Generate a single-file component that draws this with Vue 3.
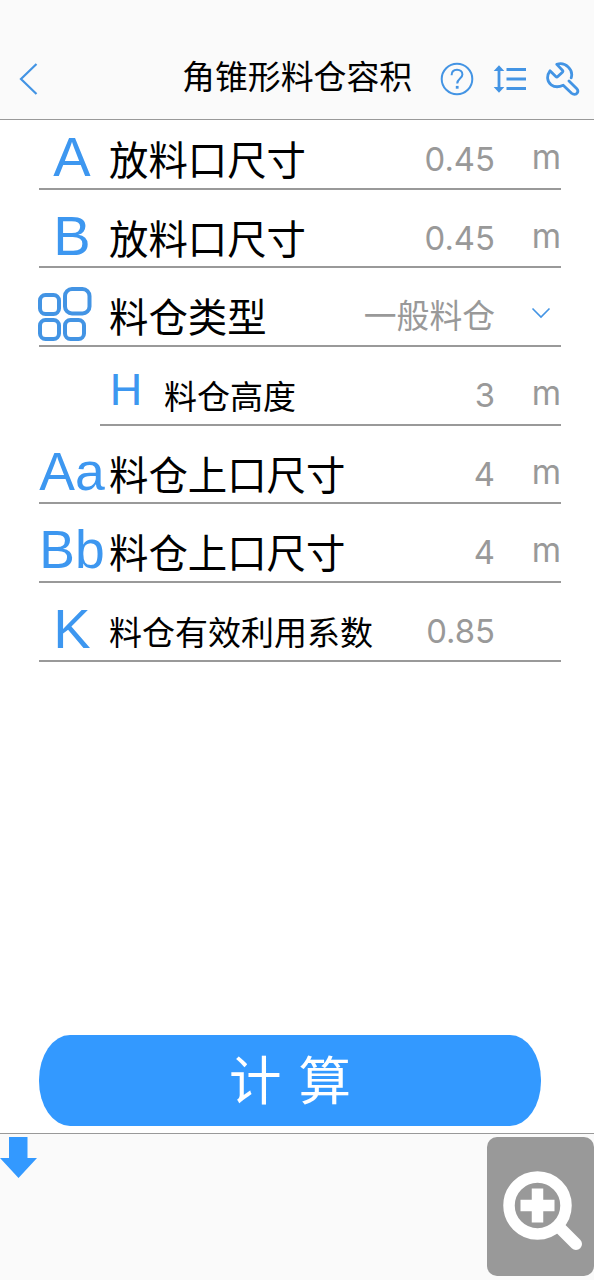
<script setup>
import { reactive } from "vue";

const rows = reactive([
  { key: "A", label: "放料口尺寸", value: "0.45", unit: "m" },
  { key: "B", label: "放料口尺寸", value: "0.45", unit: "m" },
  { icon: true, label: "料仓类型", value: "一般料仓", select: true },
  { key: "H", label: "料仓高度", value: "3", unit: "m", sub: true },
  { key: "Aa", label: "料仓上口尺寸", value: "4", unit: "m", wide: true },
  { key: "Bb", label: "料仓上口尺寸", value: "4", unit: "m", wide: true },
  { key: "K", label: "料仓有效利用系数", value: "0.85", small: true },
]);
</script>

<template>
  <div class="page">
    <header class="header">
      <svg class="back" viewBox="0 0 20 34">
        <path d="M17.5 2L2 17L17.5 32" />
      </svg>
      <h1 class="title">角锥形料仓容积</h1>
      <div class="tools">
        <svg class="tool" viewBox="0 0 34 34">
          <circle cx="17" cy="17" r="15.3" />
          <path d="M11.6 13.2C11.6 9.6 13.8 7.7 17 7.7C20.2 7.7 22.4 9.7 22.4 12.4C22.4 16.5 17.2 16.6 17.2 21.6" />
          <path d="M15.8 25.3H18.6" stroke-width="2.8" />
        </svg>
        <svg class="tool" viewBox="0 0 34 34">
          <path d="M6 6V28" stroke-width="2.8" />
          <path class="solid" d="M6 3.2L11.3 9H.7ZM6 30.8L11.3 25H.7Z" />
          <path d="M13.5 7.5H33M13.5 17H33M13.5 26.4H33" stroke-width="3" />
        </svg>
        <svg class="tool wrench" viewBox="0 0 34 34">
          <path
            d="M25.2 15.8C26.3 12.2 25.2 7.8 22.2 5C19 1.9 14.6 1 10.8 2.4L16.4 8.2C17 8.9 17 9.6 16.4 10.2L11.8 14.6C11.2 15.2 10.4 15.2 9.8 14.6L4 8.8C.2 14 1.2 20 5.2 22.8C8.6 25.3 13 25.2 17.2 23.2L25.6 31.2C27.4 32.8 30.1 32.7 31.2 31C32.3 29.3 32 27.8 30.6 26.4L23 19"
          />
        </svg>
      </div>
    </header>

    <main class="form">
      <div
        v-for="(row, i) in rows"
        :key="i"
        class="row"
        :class="{ sub: row.sub, small: row.small, wide: row.wide }"
      >
        <div class="symbol">
          <svg v-if="row.icon" class="grid-icon" viewBox="0 0 54 54">
            <rect x="2" y="8" width="19" height="19" rx="5.5" />
            <rect x="27" y="2" width="24.5" height="24.5" rx="7" />
            <rect x="2" y="33" width="19" height="19" rx="5.5" />
            <rect x="27" y="33" width="19" height="19" rx="5.5" />
          </svg>
          <span v-else>{{ row.key }}</span>
        </div>
        <div class="label">{{ row.label }}</div>
        <div class="value">{{ row.value }}</div>
        <div class="unit">
          <svg v-if="row.select" class="chevron" viewBox="0 0 20 12">
            <path d="M1.5 1.5L10 10L18.5 1.5" />
          </svg>
          <template v-else>{{ row.unit }}</template>
        </div>
      </div>
    </main>

    <button class="calc">计 算</button>

    <footer class="footer">
      <svg class="arrow" viewBox="0 0 37 41">
        <path d="M9 0H27.5V21H37L18.5 41L0 21H9Z" />
      </svg>
      <div class="zoom">
        <svg class="glass" viewBox="0 0 80 80">
          <path d="M56 56L73 73" stroke-width="12" stroke-linecap="round" />
          <circle cx="34.5" cy="34.5" r="28.5" stroke-width="11.5" />
          <path d="M34.5 17.5V51.5M17.5 34.5H51.5" stroke-width="11.5" />
        </svg>
      </div>
    </footer>
  </div>
</template>

<style>
body {
  margin: 0;
  background: #fff;
}
</style>

<style scoped>
.page {
  width: 594px;
  height: 1280px;
  box-sizing: border-box;
  display: flex;
  flex-direction: column;
  background: #fff;
  color: #000;
  font-family: Inter, "Noto Sans CJK SC", sans-serif;
  overflow: hidden;
}

.header {
  height: 120px;
  box-sizing: border-box;
  padding: 38px 14px 0 19px;
  display: flex;
  align-items: center;
  background: #fafafa;
  border-bottom: 1px solid #999;
}

.back {
  width: 20px;
  height: 34px;
  fill: none;
  stroke: #4394e4;
  stroke-width: 2.2;
}

.title {
  margin: 0 0 0 143px;
  padding-bottom: 3px;
  font-size: 32.9px;
  line-height: 40px;
  font-weight: 400;
  white-space: nowrap;
}

.tools {
  margin-left: auto;
  display: flex;
  gap: 19px;
}

.tool {
  width: 34px;
  height: 34px;
  fill: none;
  stroke: #4394e4;
  stroke-width: 2;
}

.tool .solid {
  fill: #4394e4;
  stroke: none;
}

.wrench {
  stroke-width: 2.8;
  stroke-linecap: round;
  stroke-linejoin: round;
}

.form {
  margin: -9px 33px 0 39px;
}

.row {
  height: 78.7px;
  box-sizing: border-box;
  padding-top: 22px;
  display: flex;
  align-items: center;
  border-bottom: 2px solid #999;
}

.symbol {
  width: 66px;
  margin-right: 4px;
  padding-bottom: 7px;
  text-align: center;
  color: #3d97f0;
  font-family: "Liberation Sans", Arial, sans-serif;
  font-size: 56px;
  line-height: 56px;
}

.wide .symbol {
  font-size: 53.5px;
}

.grid-icon {
  display: block;
  width: 54px;
  height: 54px;
  margin-left: -1px;
  fill: none;
  stroke: #4394e4;
  stroke-width: 4;
}

.label {
  padding-top: 1px;
  font-size: 39.4px;
  line-height: 50px;
  white-space: nowrap;
}

.small .label,
.sub .label {
  font-size: 33px;
}

.value {
  margin-left: auto;
  padding-bottom: 3px;
  color: #999;
  font-size: 32.8px;
  line-height: 40px;
}

.unit {
  width: 66px;
  padding-bottom: 7px;
  color: #999;
  font-size: 33.5px;
  line-height: 40px;
  text-align: right;
}

.chevron {
  display: block;
  width: 20px;
  height: 12px;
  margin: 0 10px 3px auto;
  fill: none;
  stroke: #4394e4;
  stroke-width: 1.6;
}

.sub {
  margin-left: 61px;
}

.sub .symbol {
  width: 52px;
  margin-right: 12px;
  padding-bottom: 13px;
  font-size: 45px;
}

.calc {
  width: 502px;
  height: 91px;
  margin: auto 0 7px 39px;
  padding: 0 0 8px;
  border: 0;
  border-radius: 31px / 45px;
  background: #3399ff;
  color: #fff;
  font-family: inherit;
  font-size: 52.5px;
  word-spacing: 2px;
}

.footer {
  height: 147px;
  box-sizing: border-box;
  padding-top: 3px;
  display: flex;
  justify-content: space-between;
  background: #fafafa;
  border-top: 1px solid #999;
}

.arrow {
  width: 37px;
  height: 41px;
  fill: #3399ff;
}

.zoom {
  width: 107px;
  height: 139px;
  border-radius: 10px;
  background: #999;
}

.glass {
  display: block;
  width: 80px;
  height: 80px;
  margin: 34px 0 0 16px;
  fill: none;
  stroke: #fff;
}
</style>
